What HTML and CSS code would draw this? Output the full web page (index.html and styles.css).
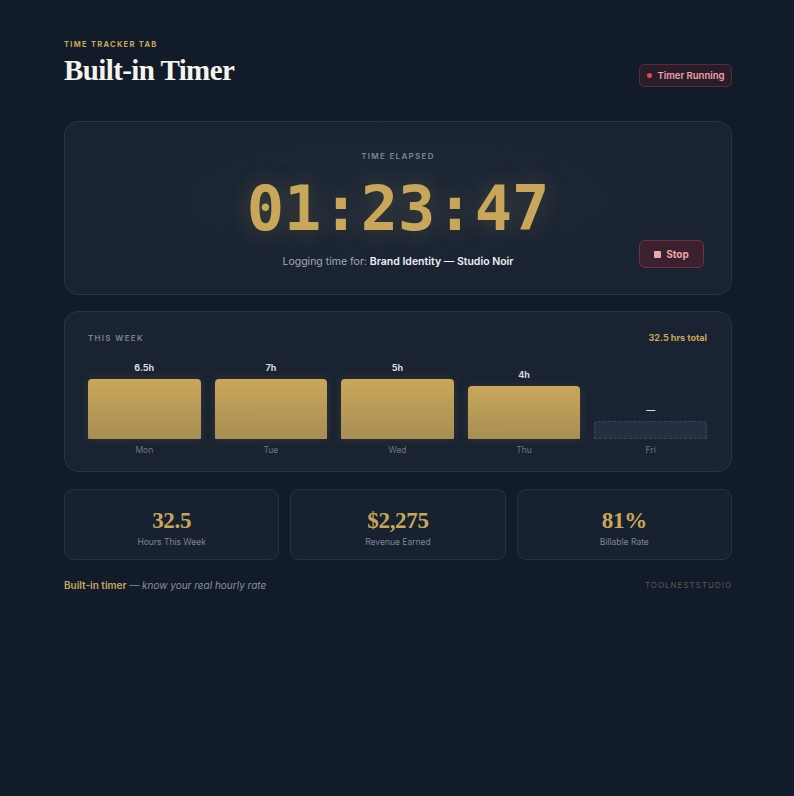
FILE: index.html
```html
<!DOCTYPE html>
<html>
<head>
<meta charset="utf-8">
<link rel="stylesheet" href="styles.css">
</head>
<body>
<div class="page">
  <header class="top">
    <div>
      <div class="eyebrow">TIME TRACKER TAB</div>
      <h1 class="title">Built-in Timer</h1>
    </div>
    <div class="badge"><span class="dot"></span>Timer Running</div>
  </header>

  <section class="card timer">
    <div class="label-sm">TIME ELAPSED</div>
    <div class="clock">01<span class="colon">:</span>23<span class="colon">:</span>47</div>
    <div class="logging">Logging time for: <strong>Brand Identity — Studio Noir</strong></div>
    <button class="stop"><span class="sq"></span>Stop</button>
  </section>

  <section class="card week">
    <div class="week-head">
      <div class="label-sm left">THIS WEEK</div>
      <div class="total">32.5 hrs total</div>
    </div>
    <div class="bars">
      <div class="col"><div class="val">6.5h</div><div class="bar" style="height:60px"></div><div class="day">Mon</div></div>
      <div class="col"><div class="val">7h</div><div class="bar" style="height:60px"></div><div class="day">Tue</div></div>
      <div class="col"><div class="val">5h</div><div class="bar" style="height:60px"></div><div class="day">Wed</div></div>
      <div class="col"><div class="val">4h</div><div class="bar" style="height:53px"></div><div class="day">Thu</div></div>
      <div class="col"><div class="val">—</div><div class="bar empty" style="height:18px"></div><div class="day">Fri</div></div>
    </div>
  </section>

  <section class="stats">
    <div class="stat"><div class="num">32.5</div><div class="cap">Hours This Week</div></div>
    <div class="stat"><div class="num">$2,275</div><div class="cap">Revenue Earned</div></div>
    <div class="stat"><div class="num">81%</div><div class="cap">Billable Rate</div></div>
  </section>

  <footer class="foot">
    <div><span class="fb">Built-in timer</span> <span class="fi">— know your real hourly rate</span></div>
    <div class="brand">TOOLNESTSTUDIO</div>
  </footer>
</div>
</body>
</html>
```

FILE: styles.css
```css
* { box-sizing: border-box; }
html, body { margin: 0; padding: 0; }
body {
  background: #111b29;
  font-family: "Inter", "Noto Sans", sans-serif;
  color: #e6e8ec;
  width: 794px;
  height: 796px;
}
.page {
  padding: 40px 62px 0 64px;
}
.top {
  display: flex;
  justify-content: space-between;
  align-items: flex-start;
}
.eyebrow {
  font-size: 7.5px;
  font-weight: 700;
  letter-spacing: 1.3px;
  color: #c9a75a;
  line-height: 10px;
}
.title {
  margin: 4px 0 0 0;
  font-family: "Liberation Serif", "DejaVu Serif", serif;
  font-weight: 700;
  font-size: 29px;
  letter-spacing: -0.6px;
  line-height: 32px;
  color: #f6f3ec;
}
.badge {
  margin-top: 24px;
  height: 23px;
  width: 93px;
  display: flex;
  align-items: center;
  justify-content: center;
  gap: 6px;
  border: 1px solid #5a2a35;
  background: #2a1d29;
  border-radius: 5px;
  color: #f0a4ac;
  font-size: 9.5px;
  font-weight: 600;
}
.dot { width: 5px; height: 5px; border-radius: 50%; background: #e0474f; }

.card {
  background: #1a2331;
  border: 1px solid #2a3443;
  border-radius: 14px;
}
.timer {
  margin-top: 34px;
  height: 174px;
  position: relative;
  display: flex;
  flex-direction: column;
  align-items: center;
  padding-top: 29px;
  background: radial-gradient(ellipse at 50% 45%, #1f2937 0%, #1a2331 60%);
}
.label-sm {
  font-size: 8px;
  font-weight: 600;
  letter-spacing: 1.3px;
  color: #7d8594;
  line-height: 10px;
}
.clock {
  margin-top: 14px;
  font-family: "DejaVu Sans Mono", "Liberation Mono", monospace;
  font-size: 62px;
  line-height: 68px;
  font-weight: 700;
  color: #c9a75a;
  letter-spacing: 0;
  text-shadow: 0 0 24px rgba(201, 167, 90, 0.25);
}
.colon { margin: 0 1px; }
.logging {
  margin-top: 12px;
  font-size: 10.5px;
  color: #a3aab6;
}
.logging strong { color: #eef0f3; font-weight: 600; }
.stop {
  position: absolute;
  right: 27px;
  top: 118px;
  width: 65px;
  height: 28px;
  border: 1px solid #7a2e38;
  background: #3a2130;
  border-radius: 6px;
  color: #f0a4ac;
  font-family: "Inter", sans-serif;
  font-size: 10px;
  font-weight: 700;
  display: flex;
  align-items: center;
  justify-content: center;
  gap: 5px;
  padding: 0;
}
.sq { width: 7px; height: 7px; background: #f0a4ac; border-radius: 1px; }

.week {
  margin-top: 16px;
  height: 161px;
  padding: 20px 24px 0 23px;
}
.week-head {
  display: flex;
  justify-content: space-between;
  align-items: center;
}
.total { font-size: 9px; font-weight: 700; color: #c9a75a; }
.bars {
  margin-top: 16px;
  display: grid;
  grid-template-columns: repeat(5, 1fr);
  gap: 14px;
  height: 96px;
}
.col {
  display: flex;
  flex-direction: column;
  justify-content: flex-end;
  align-items: stretch;
}
.val {
  text-align: center;
  font-size: 9px;
  font-weight: 700;
  color: #d7dbe2;
  line-height: 12px;
  margin-bottom: 5px;
}
.bar {
  border-radius: 4px 4px 1px 1px;
  background: linear-gradient(180deg, #c9a85a 0%, #a88d55 100%);
  box-shadow: 0 0 10px rgba(201, 167, 90, 0.15);
}
.bar.empty {
  background: #243041;
  border: 1px dashed #3a4556;
  box-shadow: none;
}
.day {
  margin-top: 6px;
  text-align: center;
  font-size: 8.5px;
  color: #6e7786;
  line-height: 10px;
  height: 10px;
}

.stats {
  margin-top: 17px;
  display: grid;
  grid-template-columns: repeat(3, 1fr);
  gap: 11px;
}
.stat {
  height: 71px;
  background: #17212f;
  border: 1px solid #27313f;
  border-radius: 9px;
  display: flex;
  flex-direction: column;
  align-items: center;
  padding-top: 18px;
}
.num {
  font-family: "Liberation Serif", "DejaVu Serif", serif;
  font-size: 23px;
  font-weight: 700;
  color: #c9a75a;
  line-height: 26px;
  letter-spacing: -0.3px;
}
.cap {
  margin-top: 3px;
  font-size: 8.5px;
  color: #7d8594;
}
.foot {
  margin-top: 19px;
  display: flex;
  justify-content: space-between;
  align-items: center;
  font-size: 10px;
}
.fb { color: #c9a75a; font-weight: 600; }
.fi { color: #8a909b; font-style: italic; }
.brand { font-size: 8px; letter-spacing: 1px; color: #5c5a52; }
```
